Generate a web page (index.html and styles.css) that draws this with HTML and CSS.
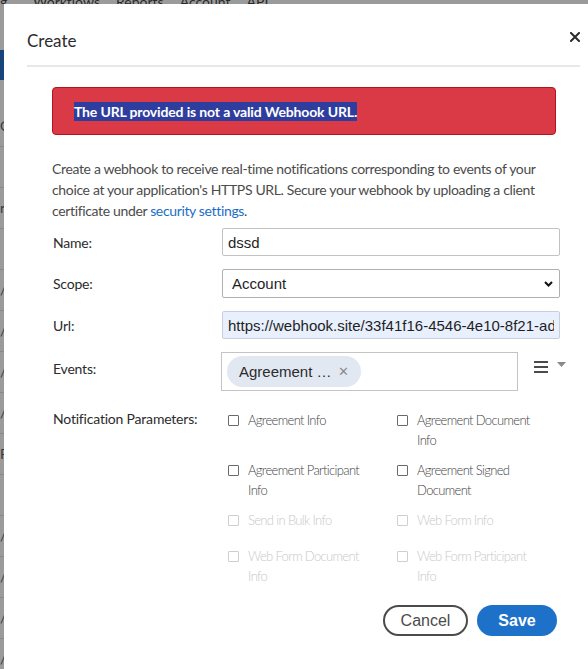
FILE: index.html
```html
<!DOCTYPE html>
<html lang="en">
<head>
<meta charset="utf-8">
<title>Create Webhook</title>
<link rel="stylesheet" href="styles.css">
</head>
<body>
<div class="page">
  <div class="topnav"><span class="nav-g">g</span><span>Workflows</span><span>Reports</span><span>Account</span><span>API</span></div>
  <div class="bluebar"></div>
  <div class="rows">
    <div class="bgrow">C</div><div class="bgrow"></div><div class="bgrow">r</div><div class="bgrow"></div>
    <div class="bgrow">/</div><div class="bgrow">/</div><div class="bgrow">/</div><div class="bgrow">/</div>
    <div class="bgrow">R</div><div class="bgrow"></div><div class="bgrow">/</div><div class="bgrow">/</div>
    <div class="bgrow">/</div><div class="bgrow">/</div>
  </div>
</div>

<div class="modal" role="dialog" aria-labelledby="dlg-title">
  <div class="modal-header">
    <h2 id="dlg-title" class="modal-title">Create</h2>
    <button class="close-btn" aria-label="Close">
      <svg width="10" height="10" viewBox="0 0 10 10"><path d="M1 1 L9 9 M9 1 L1 9" stroke="#2c2c2c" stroke-width="2" stroke-linecap="square"/></svg>
    </button>
  </div>
  <div class="modal-body">
    <div class="error-banner"><span class="error-text">The URL provided is not a valid Webhook URL.</span></div>
    <p class="description">Create a webhook to receive real-time notifications corresponding to events of your choice at your application's HTTPS URL. Secure your webhook by uploading a client certificate under <a class="link" href="#">security settings</a>.</p>

    <div class="form">
      <div class="form-row">
        <label class="form-label">Name:</label>
        <input class="field" type="text" value="dssd">
      </div>
      <div class="form-row">
        <label class="form-label">Scope:</label>
        <div class="select-wrap">
          <select class="field select"><option>Account</option></select>
          <svg class="chevron" width="9" height="6" viewBox="0 0 9 6"><path d="M1 1 L4.5 4.5 L8 1" fill="none" stroke="#111" stroke-width="2"/></svg>
        </div>
      </div>
      <div class="form-row">
        <label class="form-label">Url:</label>
        <input class="field autofill" type="text" value="https://webhook.site/33f41f16-4546-4e10-8f21-ad4c1b2e9f07">
      </div>
      <div class="form-row events-row">
        <label class="form-label">Events:</label>
        <div class="events-box">
          <span class="chip">Agreement …<span class="chip-x">✕</span></span>
        </div>
        <div class="events-menu">
          <svg width="15" height="12" viewBox="0 0 15 12"><path d="M0 1 H14 M0 6 H14 M0 11 H14" stroke="#4b4b4b" stroke-width="2"/></svg>
          <svg class="caret" width="9" height="5" viewBox="0 0 9 5"><path d="M0 0 H9 L4.5 5 Z" fill="#8a8a8a"/></svg>
        </div>
      </div>
      <div class="form-row params-row">
        <label class="form-label">Notification Parameters:</label>
        <div class="params-grid">
          <div class="param"><span class="cb"></span><span class="param-text">Agreement Info</span></div>
          <div class="param"><span class="cb"></span><span class="param-text">Agreement Document Info</span></div>
          <div class="param"><span class="cb"></span><span class="param-text">Agreement Participant Info</span></div>
          <div class="param"><span class="cb"></span><span class="param-text">Agreement Signed Document</span></div>
          <div class="param disabled"><span class="cb"></span><span class="param-text">Send in Bulk Info</span></div>
          <div class="param disabled"><span class="cb"></span><span class="param-text">Web Form Info</span></div>
          <div class="param disabled last"><span class="cb"></span><span class="param-text">Web Form Document Info</span></div>
          <div class="param disabled last"><span class="cb"></span><span class="param-text">Web Form Participant Info</span></div>
        </div>
      </div>
    </div>

    <div class="footer">
      <button class="btn btn-cancel">Cancel</button>
      <button class="btn btn-save">Save</button>
    </div>
  </div>
</div>
</body>
</html>
```

FILE: styles.css
```css
html, body {
  margin: 0;
  padding: 0;
}
body {
  width: 588px;
  height: 669px;
  overflow: hidden;
  background: #9b9b9b;
  font-family: Lato, "Liberation Sans", sans-serif;
  position: relative;
}

/* dimmed page behind the dialog */
.page {
  color: #2a2a2a;
}
.topnav {
  display: flex;
  gap: 16px;
  height: 8px;
  font-size: 14px;
  line-height: 12px;
  margin-top: -4px;
  overflow: hidden;
}
.nav-g {
  width: 17px;
}
.bluebar {
  margin-top: 46px;
  height: 30px;
  background: #16457a;
}
.rows {
  margin-top: 26px;
}
.bgrow {
  height: 40px;
  border-bottom: 1px solid #8a8a8a;
  font-size: 14px;
  line-height: 40px;
  color: #3a3a3a;
}

/* dialog */
.modal {
  position: absolute;
  left: 4px;
  top: 4px;
  width: 600px;
  height: 680px;
  background: #fff;
}
.modal-header {
  display: flex;
  align-items: center;
  justify-content: space-between;
  height: 50px;
  padding-top: 11px;
  margin: 0 24px 0 23px;
  border-bottom: 2px solid #e8e8e8;
}
.modal-title {
  margin: 0;
  font-size: 17px;
  font-weight: 400;
  color: #2c2c2c;
}
.close-btn {
  border: 0;
  background: none;
  padding: 0;
  width: 10px;
  height: 10px;
  margin-top: -6px;
  display: flex;
}

.modal-body {
  padding: 20px 48px 0 48px;
}
.error-banner {
  height: 46px;
  display: flex;
  align-items: center;
  padding: 0 20px 0 21px;
  background: #da3a45;
  border: 1px solid #b3151f;
  border-radius: 4px;
}
.error-text {
  font-size: 14px;
  font-weight: 700;
  line-height: 19px;
  letter-spacing: -0.15px;
  color: #fff;
  background: #2f3e9e;
}

.description {
  margin: 23px 0 0 0;
  font-size: 14px;
  line-height: 21px;
  letter-spacing: -0.35px;
  color: #4b4b4b;
}
.link {
  color: #1a6ec8;
  text-decoration: none;
}

.form {
  margin-top: 7px;
  padding-bottom: 1px;
}
.form-row {
  display: flex;
  align-items: center;
  margin-bottom: 13px;
}
.form-row:last-child {
  margin-bottom: 0;
}
.form-label {
  width: 170px;
  flex: none;
  padding-left: 1px;
  box-sizing: border-box;
  font-size: 14px;
  letter-spacing: -0.2px;
  color: #2c2c2c;
}
.field {
  flex: none;
  box-sizing: border-box;
  width: 338px;
  height: 28px;
  border: 1px solid #c2c2c2;
  border-radius: 2px;
  padding: 0 5px;
  font-family: "Liberation Sans", Arial, sans-serif;
  font-size: 15px;
  color: #1f1f1f;
  background: #fff;
  margin: 0;
  outline: none;
}
.autofill {
  background: #e8f0fe;
  border-color: #c8cfdb;
}
.select-wrap {
  position: relative;
  display: flex;
  flex: none;
}
.select {
  -webkit-appearance: none;
  appearance: none;
  height: 29px;
  padding-left: 9px;
  border-color: #b0b0b0;
}
.chevron {
  position: absolute;
  right: 7px;
  top: 12px;
  pointer-events: none;
}

.events-row {
  align-items: flex-start;
  margin-bottom: 19px;
}
.events-row .form-label {
  margin-top: 8px;
  width: 169px;
}
.events-box {
  flex: none;
  box-sizing: border-box;
  width: 297px;
  height: 39px;
  border: 1px solid #c4c4c4;
  padding: 3px 5px;
  display: flex;
  align-items: center;
}
.chip {
  display: inline-flex;
  align-items: center;
  height: 31px;
  width: 134px;
  box-sizing: border-box;
  padding: 0 12px;
  border-radius: 16px;
  background: #e2e8f2;
  font-family: "Liberation Sans", Arial, sans-serif;
  font-size: 15px;
  color: #2c2c2c;
  white-space: nowrap;
}
.chip-x {
  margin-left: auto;
  color: #8c8c8c;
  font-size: 13px;
}
.events-menu {
  flex: none;
  display: flex;
  gap: 8px;
  margin-left: 16px;
  margin-top: 9px;
}
.caret {
  margin-top: 1px;
}

.params-row {
  align-items: flex-start;
}
.params-grid {
  flex: none;
  margin-left: 6px;
  display: grid;
  grid-template-columns: 169px 169px;
  row-gap: 10px;
}
.param {
  display: flex;
  align-items: flex-start;
  font-size: 13px;
  font-weight: 300;
  line-height: 20px;
  letter-spacing: -0.65px;
  color: #444;
}
.param.last {
  margin-top: 6px;
}
.cb {
  flex: none;
  width: 11px;
  height: 11px;
  box-sizing: border-box;
  border: 1.5px solid #6a6a6a;
  border-radius: 1px;
  margin-top: 5px;
  margin-right: 9px;
}
.param-text {
  width: 128px;
}
.param.disabled {
  color: #c9c9c9;
}
.param.disabled .cb {
  border-color: #cfcfcf;
}

.footer {
  display: flex;
  justify-content: flex-end;
  gap: 9px;
  margin-top: 18px;
  width: 505px;
}
.btn {
  height: 31px;
  border-radius: 16px;
  font-family: "Liberation Sans", Arial, sans-serif;
  font-size: 16px;
  padding: 0;
  box-sizing: border-box;
}
.btn-cancel {
  width: 85px;
  border: 2px solid #4b4b4b;
  background: #fff;
  color: #4b4b4b;
}
.btn-save {
  width: 80px;
  border: 0;
  background: #1d71c9;
  color: #fff;
  font-weight: 700;
}
```
